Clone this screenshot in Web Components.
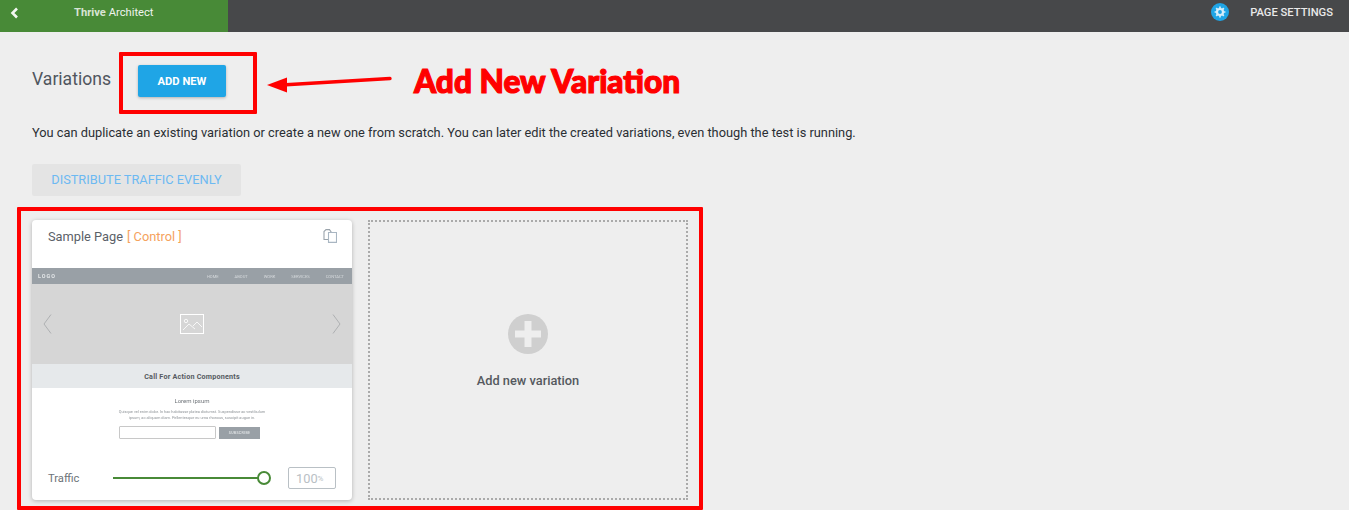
<!DOCTYPE html>
<html lang="en">
<head>
<meta charset="utf-8">
<title>Variations</title>
<style>
  html, body { margin: 0; height: 510px; overflow: hidden; background: #eee; }
  body { font-family: Roboto, "Liberation Sans", sans-serif; position: relative; }
</style>
</head>
<body>
<tcb-topbar></tcb-topbar>
<variations-page></variations-page>
<red-annotations></red-annotations>

<script>
class TcbTopbar extends HTMLElement {
  constructor() {
    super();
    this.attachShadow({ mode: 'open' }).innerHTML = `
      <style>
        :host { display: flex; height: 32px; background: #47484a; color: #fff; }
        .brand {
          width: 228px; background: #488a37; display: flex; align-items: center;
          padding-left: 10px; box-sizing: border-box; padding-bottom: 7px;
        }
        .brand svg { display: block; }
        .name { margin-left: 55px; font-size: 11.2px; color: #f0f4ee; }
        .name b { font-weight: 700; color: #d8e4d4; }
        .right {
          margin-left: auto; display: flex; align-items: center; padding: 0 16px 8px 0;
          font-size: 11.2px; font-weight: 500; color: #e9e9e9;
        }
        .gear {
          width: 18px; height: 18px; border-radius: 50%; background: #1fa5e6;
          display: flex; align-items: center; justify-content: center; margin-right: 21px;
        }
      </style>
      <div class="brand">
        <svg width="9" height="12" viewBox="0 0 9 12"><path d="M7 1.5 2.5 6 7 10.5" fill="none" stroke="#f4f7f2" stroke-width="2.6"/></svg>
        <span class="name"><b>Thrive</b> Architect</span>
      </div>
      <div class="right">
        <span class="gear">
          <svg width="12" height="12" viewBox="0 0 12 12">
            <circle cx="6" cy="6" r="3" fill="none" stroke="#d6eefb" stroke-width="2.200"/>
            <path d="M6 .6v2M6 9.400v2M.6 6h2M9.400 6h2M2.200 2.200l1.400 1.400M8.400 8.400l1.400 1.400M2.200 9.800l1.400-1.400M8.400 3.600l1.400-1.400" stroke="#d6eefb" stroke-width="1.700"/>
          </svg>
        </span>
        PAGE SETTINGS
      </div>`;
  }
}

class PagePreview extends HTMLElement {
  constructor() {
    super();
    this.attachShadow({ mode: 'open' }).innerHTML = `
      <style>
        :host { display: block; color: #8b9196; }
        nav {
          height: 16px; background: #99a0a6; display: flex; align-items: center;
          padding: 0 8px 0 6px; font-size: 4.100px; color: #d6dadd;
        }
        nav b { font-size: 5.400px; letter-spacing: 1px; color: #e4e7e9; margin-right: auto; }
        nav span { margin-left: 16px; }
        nav span, nav b { filter: blur(.25px); }
        .hero {
          height: 80px; background: #d6d6d6; display: flex; align-items: center;
          justify-content: space-between; padding: 0 11px;
        }
        .cta {
          height: 24px; background: #e6e9eb; display: flex; align-items: center; justify-content: center;
          font-size: 7.200px; font-weight: 700; color: #555a5f; letter-spacing: .2px;
        }
        .body { display: flex; flex-direction: column; align-items: center; padding-top: 8px; filter: blur(.3px); }
        h4 { margin: 0; font-size: 6px; font-weight: 400; color: #70757a; line-height: 10px; }
        p {
          margin: 3px 0 0; font-size: 3.900px; line-height: 5.500px; width: 170px;
          text-align: center; color: #8f9498;
        }
        form { display: flex; gap: 3px; margin: 6px 5px 0 0; align-items: center; }
        .field { width: 95px; height: 11px; background: #fff; border: 1px solid #c8c8c8; border-radius: 1px; }
        .sub {
          width: 41px; height: 12px; background: #99a0a6; color: #e2e5e7; font-size: 3.600px; font-weight: 500;
          display: flex; align-items: center; justify-content: center; letter-spacing: .3px;
        }
      </style>
      <nav><b>LOGO</b><span>HOME</span><span>ABOUT</span><span>WORK</span><span>SERVICES</span><span>CONTACT</span></nav>
      <div class="hero">
        <svg width="9" height="20" viewBox="0 0 9 20"><path d="M8 .5 1 10l7 9.500" fill="none" stroke="#aeb0b2"/></svg>
        <svg width="24" height="20" viewBox="0 0 24 20" fill="none" stroke="#fff">
          <rect x=".5" y=".5" width="23" height="19"/>
          <circle cx="6" cy="7" r="1.700" stroke-width=".8"/>
          <path d="M3 16 9 10l6 5M13 12l4-4 5 5" stroke-width=".8"/>
        </svg>
        <svg width="9" height="20" viewBox="0 0 9 20"><path d="M1 .5 8 10l-7 9.500" fill="none" stroke="#aeb0b2"/></svg>
      </div>
      <div class="cta">Call For Action Components</div>
      <div class="body">
        <h4>Lorem ipsum</h4>
        <p>Quisque vel enim dolor. In hac habitasse platea dictumst. Suspendisse ac vestibulum<br>ipsum, ac aliquam diam. Pellentesque eu urna rhoncus, suscipit augue in.</p>
        <form><div class="field"></div><div class="sub">SUBSCRIBE</div></form>
      </div>`;
  }
}

class TrafficSlider extends HTMLElement {
  constructor() {
    super();
    this.attachShadow({ mode: 'open' }).innerHTML = `
      <style>
        :host {
          display: flex; align-items: center; height: 22px; padding: 0 16px;
          font-size: 11.200px; color: #6d7378;
        }
        label { width: 65px; }
        .track { width: 151px; height: 2px; background: #488a37; position: relative; }
        .thumb {
          position: absolute; right: -7px; top: -6px; width: 14px; height: 14px; box-sizing: border-box;
          border: 2px solid #488a37; border-radius: 50%; background: #fff;
        }
        .value {
          margin-left: 24px; width: 48px; height: 22px; box-sizing: border-box;
          border: 1px solid #b9c0c5; border-radius: 2px; padding-left: 7px;
          display: flex; align-items: center; font-size: 12.800px; color: #b9c0c5;
        }
        .value small { font-size: 8px; }
      </style>
      <label>Traffic</label>
      <div class="track"><div class="thumb"></div></div>
      <div class="value">100<small>%</small></div>`;
  }
}

class VariationCard extends HTMLElement {
  constructor() {
    super();
    this.attachShadow({ mode: 'open' }).innerHTML = `
      <style>
        :host {
          display: flex; flex-direction: column; width: 320px; height: 280px;
          background: #fff; border-radius: 4px; overflow: hidden;
          box-shadow: 0 1px 4px rgba(0,0,0,.25);
        }
        header { height: 48px; box-sizing: border-box; display: flex; padding: 8px 15px 0 16px; font-size: 12.800px; color: #5b6168; }
        header span { line-height: 17px; }
        header em { font-style: normal; color: #f5a25d; font-weight: 400; margin-left: 4px; }
        header svg { margin-left: auto; margin-top: 1px; }
        .foot { margin-top: auto; padding-bottom: 11px; }
      </style>
      <header>
        <span>Sample Page<em>[ Control ]</em></span>
        <svg width="14" height="14" viewBox="0 0 14 14" fill="none" stroke="#9aa3ab" stroke-width="1.100">
          <path d="M5 10.500H1V2.500L3 .6H6.500L8.500 3.500"/>
          <path d="M5.500 3.500h8v9.900h-8z" stroke="#a9b6c2"/>
        </svg>
      </header>
      <page-preview></page-preview>
      <div class="foot"><traffic-slider></traffic-slider></div>`;
  }
}

class AddVariation extends HTMLElement {
  constructor() {
    super();
    this.attachShadow({ mode: 'open' }).innerHTML = `
      <style>
        :host {
          display: flex; flex-direction: column; align-items: center; width: 320px; height: 280px;
          box-sizing: border-box; border: 2px dotted #aaa; padding-top: 92px;
          font-size: 12.800px; font-weight: 500; color: #55595e;
        }
        svg { display: block; margin-bottom: 19px; }
      </style>
      <svg width="40" height="40" viewBox="0 0 40 40">
        <circle cx="20" cy="20" r="20" fill="#cfcfcf"/>
        <path d="M16.500 7h7v9.500H33v7h-9.500V33h-7v-9.500H7v-7h9.500z" fill="#eee"/>
      </svg>
      <span>Add new variation</span>`;
  }
}

class VariationsPage extends HTMLElement {
  constructor() {
    super();
    this.attachShadow({ mode: 'open' }).innerHTML = `
      <style>
        :host { display: block; padding: 33px 32px 0; color: #4a5058; }
        .head { display: flex; align-items: flex-start; }
        h2 { margin: 0; padding-top: 1px; font-size: 17.600px; font-weight: 400; line-height: 26px; color: #50565e; width: 106px; }
        .add {
          width: 88px; height: 32px; background: #1fa5e6; color: #fff; border-radius: 2px;
          font-size: 11.200px; font-weight: 700; display: flex; align-items: center; justify-content: center;
          box-shadow: 0 1px 3px rgba(0,0,0,.25); padding-top: 1px; box-sizing: border-box;
        }
        p { margin: 27px 0 0; font-size: 12.800px; line-height: 18px; color: #2b2f34; }
        .dist {
          margin-top: 22px; width: 209px; height: 32px; background: #e4e4e4; border-radius: 2px;
          display: flex; align-items: center; justify-content: center; box-sizing: border-box; padding-bottom: 1px;
          font-size: 12.800px; color: #6cb9f2;
        }
        .cards { display: flex; gap: 16px; margin-top: 24px; }
      </style>
      <div class="head"><h2>Variations</h2><div class="add">ADD NEW</div></div>
      <p>You can duplicate an existing variation or create a new one from scratch. You can later edit the created variations, even though the test is running.</p>
      <div class="dist">DISTRIBUTE TRAFFIC EVENLY</div>
      <div class="cards"><variation-card></variation-card><add-variation></add-variation></div>`;
  }
}

// the red marks someone drew over the screenshot
class RedAnnotations extends HTMLElement {
  constructor() {
    super();
    this.attachShadow({ mode: 'open' }).innerHTML = `
      <style>
        :host { position: absolute; inset: 0; display: block; pointer-events: none; }
        .box { position: absolute; box-sizing: border-box; border: 4px solid #f00; border-radius: 1px; }
        .btn { left: 119px; top: 52px; width: 138px; height: 62px; }
        .cards { left: 17px; top: 207px; width: 686px; height: 303px; }
        svg { position: absolute; left: 266px; top: 74px; }
        .label {
          position: absolute; left: 414px; top: 61px; line-height: 40px; white-space: nowrap;
          font-family: Lato, sans-serif; font-size: 31.600px; font-weight: 900; color: #f00;
          -webkit-text-stroke: 1.200px #f00;
        }
      </style>
      <div class="box btn"></div>
      <div class="box cards"></div>
      <svg width="128" height="20" viewBox="0 0 128 20">
        <path d="M1 11 21 3.500v15z" fill="#f00"/>
        <path d="M20 10.800 124 4.500" stroke="#f00" stroke-width="3.400" stroke-linecap="round"/>
      </svg>
      <div class="label">Add New Variation</div>`;
  }
}

customElements.define('tcb-topbar', TcbTopbar);
customElements.define('page-preview', PagePreview);
customElements.define('traffic-slider', TrafficSlider);
customElements.define('variation-card', VariationCard);
customElements.define('add-variation', AddVariation);
customElements.define('variations-page', VariationsPage);
customElements.define('red-annotations', RedAnnotations);
</script>
</body>
</html>
